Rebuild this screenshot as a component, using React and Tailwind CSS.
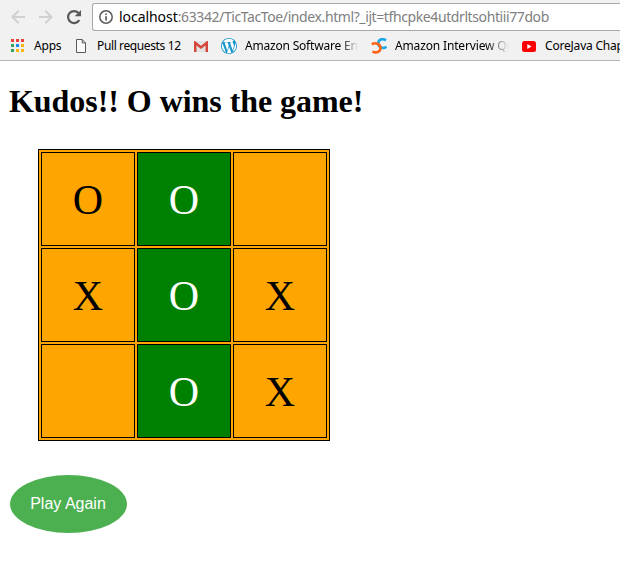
const BOARD = [
  { mark: "O" }, { mark: "O", win: true }, { mark: "" },
  { mark: "X" }, { mark: "O", win: true }, { mark: "X" },
  { mark: "" }, { mark: "O", win: true }, { mark: "X" },
];

function AppsIcon() {
  const colors = ["#ea4335", "#ea4335", "#ea4335", "#34a05a", "#1a8cf0", "#fbb50b", "#34a05a", "#fbb50b", "#fbb50b"];
  return (
    <svg className="h-[13px] w-[13px] shrink-0" viewBox="0 0 13 13" shapeRendering="crispEdges">
      {colors.map((c, i) => (
        <rect key={i} x={(i % 3) * 5} y={Math.floor(i / 3) * 5} width="3" height="3" fill={c} />
      ))}
    </svg>
  );
}

function Arrow({ flip }) {
  return (
    <svg className={flip ? "h-[14px] w-[14px] shrink-0 -scale-x-100" : "h-[14px] w-[14px] shrink-0"} viewBox="0 0 14 14" fill="none" stroke="#d0d0d0" strokeWidth="2">
      <path d="M14 7H1.5M7.7 0.7L1.4 7l6.3 6.3" />
    </svg>
  );
}

export default function App() {
  return (
    <div className="h-[564px] w-[620px] overflow-hidden bg-white font-['Liberation_Serif',serif] text-black">
      <header className="h-[61px] border-b border-[#b4b4b4] bg-[#f1f1f1] font-['Noto_Sans',sans-serif]">
        <div className="flex h-[31px] items-start">
          <div className="flex h-[34px] w-[92px] shrink-0 items-center pl-[11px]">
            <Arrow />
            <div className="w-[14px] shrink-0" />
            <Arrow flip />
            <svg className="ml-[13px] h-4 w-4 shrink-0" viewBox="0 0 16 16">
              <path d="M13.3 11A6 6 0 1 1 12.5 4" fill="none" stroke="#5a5a5a" strokeWidth="2.2" />
              <path d="M15 1v6.3H8.7z" fill="#5a5a5a" />
            </svg>
          </div>
          <div className="mt-[3px] flex h-7 w-[528px] items-center rounded-l-[3px] border border-r-0 border-[#a8a8a8] bg-white pl-[6px]">
            <svg className="h-[14px] w-[14px] shrink-0" viewBox="0 0 14 14">
              <circle cx="7" cy="7" r="6.2" fill="none" stroke="#5a5a5a" strokeWidth="1.5" />
              <path d="M6.2 6.2h1.7v4.3H6.2zM6.2 3.4h1.7v1.6H6.2z" fill="#5a5a5a" />
            </svg>
            <div className="ml-[6px] whitespace-nowrap text-[14px] leading-5 tracking-[-0.4px] text-[#808080]">
              <span className="tracking-[-0.05px] text-black">localhost</span>:63342/TicTacToe/index.html?_ijt=tfhcpke4utdrltsohtiii77dob
            </div>
          </div>
        </div>
        <nav className="flex h-[29px] items-center whitespace-nowrap pl-[11px] text-[12px] leading-4 tracking-[-0.2px]">
          <AppsIcon />
          <span className="ml-[10px] w-[42px] shrink-0">Apps</span>
          <svg className="h-[14px] w-[10px] shrink-0" viewBox="0 0 10 14" fill="#fafafa" stroke="#5a5a5a">
            <path d="M.5.5h5.7l3.3 3.4v9.6h-9zM6.2.5v3.4h3.3" />
          </svg>
          <span className="ml-[11px] w-[97px] shrink-0 tracking-[-0.38px]">Pull requests 12</span>
          <svg className="mt-px h-[11px] w-[14px] shrink-0" viewBox="0 0 14 11">
            <path d="M0 0h14v11H0z" fill="#e2e2e2" />
            <path d="M1.200 11V1.800l5.800 4.700 5.800-4.700V11" fill="none" stroke="#d5433a" strokeWidth="2.500" />
          </svg>
          <svg className="ml-[13px] h-4 w-4 shrink-0" viewBox="0 0 24 24">
            <circle cx="12" cy="12" r="11.500" fill="#fff" />
            <path fill="#1593ca" d="M21.469 6.825c.84 1.537 1.318 3.3 1.318 5.175 0 3.979-2.156 7.456-5.363 9.325l3.295-9.527c.615-1.54.82-2.771.82-3.864 0-.405-.026-.78-.07-1.11m-7.981.105c.647-.03 1.232-.105 1.232-.105.582-.075.514-.93-.067-.899 0 0-1.755.135-2.88.135-1.064 0-2.85-.15-2.85-.15-.585-.03-.661.855-.075.885 0 0 .54.061 1.125.09l1.68 4.605-2.37 7.08L5.354 6.9c.649-.03 1.234-.1 1.234-.1.585-.075.516-.93-.065-.896 0 0-1.746.138-2.874.138-.2 0-.438-.008-.69-.015C4.911 3.15 8.235 1.215 12 1.215c2.809 0 5.365 1.072 7.286 2.833-.046-.003-.091-.009-.141-.009-1.06 0-1.812.923-1.812 1.914 0 .89.513 1.643 1.06 2.531.411.72.89 1.643.89 2.977 0 .915-.354 1.994-.821 3.479l-1.075 3.585-3.9-11.61.001.014zM12 22.784c-1.059 0-2.081-.153-3.048-.437l3.237-9.406 3.315 9.087c.024.053.05.101.078.149-1.12.393-2.325.607-3.582.607M1.211 12c0-1.564.336-3.05.935-4.39L7.29 21.709C3.694 19.96 1.212 16.271 1.211 12M12 0C5.385 0 0 5.385 0 12s5.385 12 12 12 12-5.385 12-12S18.615 0 12 0" />
          </svg>
          <span className="ml-2 w-[113px] shrink-0 overflow-hidden [mask-image:linear-gradient(to_right,black_85%,transparent)]">Amazon Software Engineer</span>
          <svg className="ml-[13px] h-4 w-4 shrink-0" viewBox="0 0 16 16" fill="none" strokeWidth="2.600">
            <path d="M15 2.300C11.500 0 7.300 1.500 7.300 5.200c0 3.800 4.500 6.300 8.200 3.500" stroke="#1aa7e8" />
            <path d="M.8 6.300C4.500 3.800 9.500 6 9.500 10c0 4-4.500 5.500-8 3.300" stroke="#ff6418" />
          </svg>
          <span className="ml-2 w-[114px] shrink-0 overflow-hidden tracking-[-0.15px] [mask-image:linear-gradient(to_right,black_80%,transparent)]">Amazon Interview Questions</span>
          <svg className="ml-[13px] mt-px h-[11px] w-[14px] shrink-0" viewBox="0 0 14 11">
            <rect width="14" height="11" rx="2.500" fill="#f00" />
            <path d="M5.300 3v5l4.200-2.500z" fill="#fff" />
          </svg>
          <span className="ml-[9px] shrink-0">CoreJava Chapter</span>
        </nav>
      </header>
      <main className="px-2">
        <h1 className="mt-[22px] h-[36px] whitespace-nowrap pl-px text-[32px] font-bold leading-[37px] tracking-[-0.05px]">Kudos!! O wins the game!</h1>
        <div className="ml-[30px] mt-[30px] grid w-[292px] grid-cols-3 gap-[2px] border border-black bg-[#ffa500] p-[2px]">
          {BOARD.map((cell, i) => (
            <div
              key={i}
              className={
                cell.win
                  ? "flex h-[94px] items-center justify-center border border-black bg-[#008000] pt-[2px] text-[42px] leading-[48px] text-white"
                  : "flex h-[94px] items-center justify-center border border-black pt-[2px] text-[42px] leading-[48px]"
              }
            >
              {cell.mark}
            </div>
          ))}
        </div>
        <button className="ml-[2px] mt-[34px] block h-[58px] w-[117px] rounded-[50%] bg-[#4caf50] pr-px text-center font-['Liberation_Sans',sans-serif] text-[16px] leading-[18px] text-white">
          Play Again
        </button>
      </main>
    </div>
  );
}
